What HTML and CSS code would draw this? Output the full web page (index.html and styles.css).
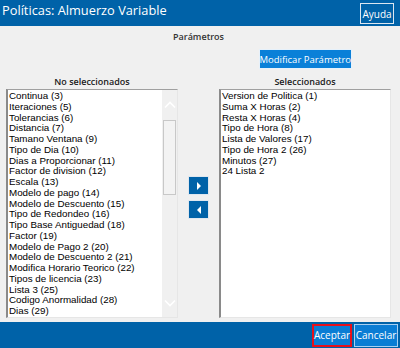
FILE: index.html
```html
<!DOCTYPE html>
<html lang="es">
<head>
    <meta charset="UTF-8">
    <meta name="viewport" content="width=device-width, initial-scale=1.0">
    <title>Políticas: Almuerzo Variable</title>
    <link rel="stylesheet" href="styles.css">
</head>
<body>
    <div class="dialog">
        <div class="titlebar">
            <span class="title">Políticas: Almuerzo Variable</span>
            <button class="btn-help">Ayuda</button>
        </div>

        <div class="content">
            <div class="section-title">Parámetros</div>

            <div class="picker">
                <div></div>
                <div></div>
                <div class="cell-center">
                    <button class="btn-modify">Modificar Parámetro</button>
                </div>

                <div class="list-label">No seleccionados</div>
                <div></div>
                <div class="list-label">Seleccionados</div>

                <div class="listbox">
                    <ul class="items">
                        <li>Continua (3)</li>
                        <li>Iteraciones (5)</li>
                        <li>Tolerancias (6)</li>
                        <li>Distancia (7)</li>
                        <li>Tamano Ventana (9)</li>
                        <li>Tipo de Dia (10)</li>
                        <li>Dias a Proporcionar (11)</li>
                        <li>Factor de division (12)</li>
                        <li>Escala (13)</li>
                        <li>Modelo de pago (14)</li>
                        <li>Modelo de Descuento (15)</li>
                        <li>Tipo de Redondeo (16)</li>
                        <li>Tipo Base Antiguedad (18)</li>
                        <li>Factor (19)</li>
                        <li>Modelo de Pago 2 (20)</li>
                        <li>Modelo de Descuento 2 (21)</li>
                        <li>Modifica Horario Teorico (22)</li>
                        <li>Tipos de licencia (23)</li>
                        <li>Lista 3 (25)</li>
                        <li>Codigo Anormalidad (28)</li>
                        <li>Dias (29)</li>
                    </ul>
                    <div class="scrollbar">
                        <div class="sb-arrow">
                            <svg width="12" height="8" viewBox="0 0 12 8"><path d="M1 6.5 L6 1.5 L11 6.5" fill="none" stroke="#fff" stroke-width="1.6"/></svg>
                        </div>
                        <div class="sb-thumb"></div>
                        <div class="sb-track"></div>
                        <div class="sb-arrow sb-down">
                            <svg width="12" height="8" viewBox="0 0 12 8"><path d="M1 1.5 L6 6.5 L11 1.5" fill="none" stroke="#fff" stroke-width="1.6"/></svg>
                        </div>
                    </div>
                </div>

                <div class="mover">
                    <button class="btn-move">
                        <svg width="6" height="8" viewBox="0 0 6 8"><path d="M1 0 L5 4 L1 8 Z" fill="#fff"/></svg>
                    </button>
                    <button class="btn-move">
                        <svg width="6" height="8" viewBox="0 0 6 8"><path d="M5 0 L1 4 L5 8 Z" fill="#fff"/></svg>
                    </button>
                </div>

                <div class="listbox">
                    <ul class="items">
                        <li>Version de Politica (1)</li>
                        <li>Suma X Horas (2)</li>
                        <li>Resta X Horas (4)</li>
                        <li>Tipo de Hora (8)</li>
                        <li>Lista de Valores (17)</li>
                        <li>Tipo de Hora 2 (26)</li>
                        <li>Minutos (27)</li>
                        <li>24 Lista 2</li>
                    </ul>
                </div>
            </div>
        </div>

        <div class="footer">
            <button class="btn-foot btn-accept">Aceptar</button>
            <button class="btn-foot btn-cancel">Cancelar</button>
        </div>
    </div>
</body>
</html>
```

FILE: styles.css
```css
html, body {
    margin: 0;
    padding: 0;
}
body {
    width: 400px;
    height: 348px;
    overflow: hidden;
    font-family: "Open Sans", "Noto Sans", sans-serif;
    background-color: #f0f0f0;
}
button {
    font-family: inherit;
    margin: 0;
    cursor: pointer;
}
.dialog {
    display: flex;
    flex-direction: column;
    height: 348px;
}

/* title bar */
.titlebar {
    height: 26px;
    flex-shrink: 0;
    background-color: #0062a8;
    display: flex;
    justify-content: space-between;
    align-items: flex-start;
    padding: 0 6px 0 2px;
}
.title {
    color: #fff;
    font-size: 12.8px;
    line-height: 21px;
}
.btn-help {
    margin-top: 3px;
    width: 34px;
    height: 21px;
    padding: 0;
    background-color: #0062a8;
    border: 1px solid #dbe6f0;
    color: #fff;
    font-size: 10px;
}

/* main area */
.content {
    flex: 1;
    padding: 3px 9px 4px 6px;
    display: flex;
    flex-direction: column;
}
.section-title {
    text-align: center;
    font-size: 9px;
    font-weight: 600;
    color: #333;
    line-height: 15px;
}
.picker {
    flex: 1;
    margin-top: 5px;
    display: grid;
    grid-template-columns: 172px 1fr 172px;
    grid-template-rows: 20px 20px 1fr;
}
.cell-center {
    display: flex;
    justify-content: center;
}
.btn-modify {
    width: 93px;
    height: 20px;
    padding: 0;
    background-color: #0a80d8;
    border: 1px solid #e6f1fb;
    color: #fff;
    font-size: 9.5px;
    white-space: nowrap;
}
.list-label {
    text-align: center;
    font-size: 9px;
    font-weight: 600;
    color: #1a1a1a;
    line-height: 14px;
    padding-top: 6px;
}

/* list boxes */
.listbox {
    display: flex;
    background-color: #fff;
    border-top: 1px solid #a0a0a0;
    border-left: 2px solid #8a8a8a;
    border-right: 1px solid #e6e6e6;
    border-bottom: 1px solid #e6e6e6;
    min-height: 0;
}
.items {
    flex: 1;
    list-style: none;
    margin: 0;
    padding: 1px 0 0 1px;
    font-family: "Liberation Sans", Arial, sans-serif;
    font-size: 9.8px;
    line-height: 10.75px;
    color: #000;
    white-space: nowrap;
    overflow: hidden;
}
.scrollbar {
    width: 15px;
    background-color: #f0f0f0;
    display: flex;
    flex-direction: column;
}
.sb-arrow {
    height: 30px;
    display: flex;
    align-items: center;
    justify-content: center;
}
.sb-down {
    height: 28px;
}
.sb-thumb {
    height: 73px;
    margin: 0 1px;
    border: 1px solid #c8c8c8;
    background-color: #f3f3f3;
}
.sb-track {
    flex: 1;
}

/* move buttons */
.mover {
    display: flex;
    flex-direction: column;
    align-items: center;
    padding-top: 87px;
    gap: 5px;
}
.btn-move {
    width: 21px;
    height: 19px;
    padding: 0;
    background-color: #0062a8;
    border: 1px solid #dfe7ef;
    display: flex;
    align-items: center;
    justify-content: center;
}

/* footer */
.footer {
    height: 27px;
    flex-shrink: 0;
    background-color: #0062a8;
    display: flex;
    justify-content: flex-end;
    align-items: center;
    gap: 2px;
    padding-right: 2px;
}
.btn-foot {
    height: 23px;
    padding: 0;
    background-color: #0a7dd4;
    color: #fff;
    font-size: 10px;
    white-space: nowrap;
}
.btn-accept {
    width: 40px;
    border: 2px solid #e8101a;
}
.btn-cancel {
    width: 44px;
    border: 1px solid #a8d0f2;
}
```
